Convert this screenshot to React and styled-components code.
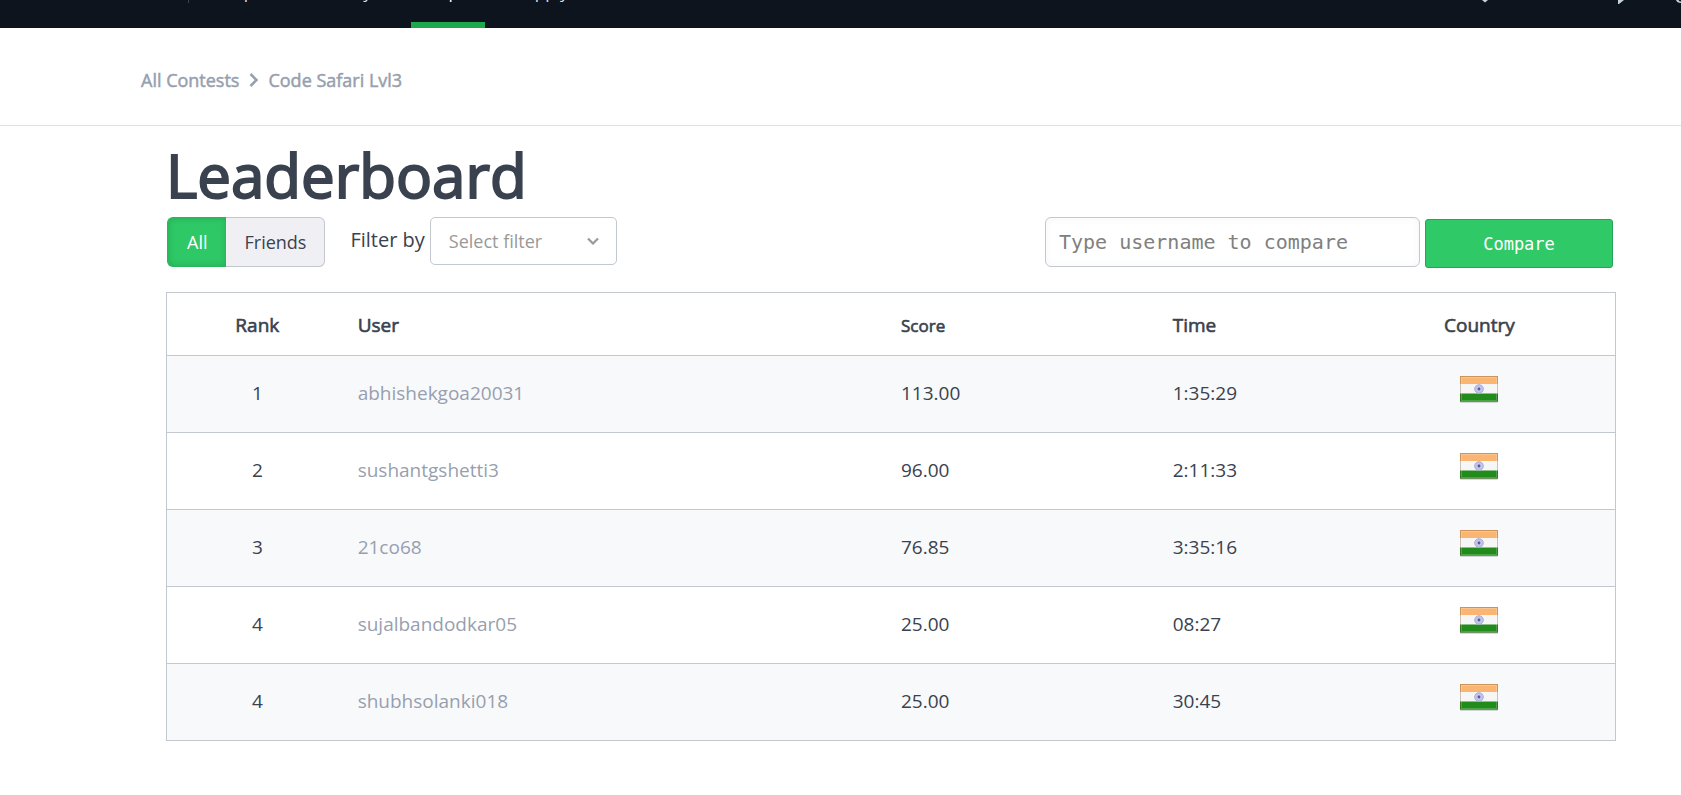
import React from "react";
import styled, { createGlobalStyle } from "styled-components";

const Global = createGlobalStyle`
  *, *::before, *::after { box-sizing: border-box; }
  body {
    margin: 0;
    background: #fff;
    color: #39424e;
    font-family: "Open Sans", "Liberation Sans", sans-serif;
    font-size: 19px;
    font-weight: 400;
  }
`;

const TopBar = styled.header`
  display: flex;
  align-items: flex-end;
  justify-content: space-between;
  height: 28px;
  overflow: hidden;
  background: #0e141e;
  padding-left: 188px;
`;

const Nav = styled.nav`
  display: flex;
  gap: 38px;
  padding-left: 27px;
  border-left: 1px solid #39424e;
  margin-bottom: 25px;
`;

const NavLink = styled.a`
  display: block;
  flex: none;
  margin-bottom: -25px;
  padding: 0 1px ${(p) => (p.$active ? 19 : 25)}px;
  border-bottom: ${(p) => (p.$active ? "6px solid #1ba94c" : "none")};
  color: ${(p) => (p.$active ? "#fff" : "#dcdfe4")};
  font-size: 17px;
  font-weight: 500;
  line-height: 23px;
  text-decoration: none;
`;

const TopActions = styled.div`
  display: flex;
  align-self: flex-start;
  svg { display: block; }
`;

const Crumbs = styled.nav`
  display: flex;
  align-items: center;
  gap: 9px;
  height: 98px;
  padding: 6px 141px 0;
  border-bottom: 1px solid #e0e1e5;
  font-size: 18px;
  line-height: 24px;
`;

const Crumb = styled.a`
  color: #979faf;
  text-decoration: none;
  -webkit-text-stroke: 0.5px;
`;

const Main = styled.main`
  padding: 10px 65px 55px 166px;
`;

const Title = styled.h1`
  margin: 0 0 2px;
  font-size: 60px;
  line-height: 79px;
  font-weight: 400;
  -webkit-text-stroke: 2px;
`;

const Toolbar = styled.div`
  display: flex;
  align-items: flex-start;
  justify-content: space-between;
  padding: 0 3px 0 1px;
  margin-bottom: 24px;
`;

const Group = styled.div`
  display: flex;
  align-items: flex-start;
  gap: 5px;
`;

const Segments = styled.div`
  display: flex;
  margin-right: 20px;
`;

const Segment = styled.button`
  height: 50px;
  padding: 0 18px;
  border: 1px solid ${(p) => (p.$on ? "#2bb65a" : "#c2c7d0")};
  border-width: ${(p) => (p.$on ? "1px 0 1px 1px" : "1px 1px 1px 0")};
  border-radius: ${(p) => (p.$on ? "6px 0 0 6px" : "0 6px 6px 0")};
  background: ${(p) => (p.$on ? "#2ec866" : "#f0eff4")};
  box-shadow: ${(p) => (p.$on ? "inset 0 0 6px rgba(0, 80, 30, 0.25)" : "none")};
  color: ${(p) => (p.$on ? "#fff" : "#39424e")};
  font: inherit;
  font-size: 18px;
  &:first-child { padding: 0 19px; }
`;

const FilterLabel = styled.label`
  font-size: 20px;
  line-height: 46px;
`;

const SelectBox = styled.div`
  position: relative;
  display: flex;
  align-items: center;
  width: 187px;
  svg { position: absolute; right: 18px; pointer-events: none; }
`;

const Select = styled.select`
  appearance: none;
  width: 100%;
  height: 48px;
  padding: 0 18px;
  border: 1px solid #c2c7d0;
  border-radius: 5px;
  background: #fff;
  color: #999;
  font: inherit;
  font-size: 18px;
`;

const CompareInput = styled.input`
  width: 375px;
  height: 50px;
  padding: 0 13px;
  border: 1px solid #c2c7d0;
  border-radius: 6px;
  box-shadow: inset 0 0 8px rgba(0, 0, 0, 0.04);
  color: #39424e;
  font-family: "DejaVu Sans Mono", monospace;
  font-size: 20px;
  &::placeholder { color: #808080; }
`;

const CompareButton = styled.button`
  width: 188px;
  height: 49px;
  margin-top: 2px;
  border: 1px solid #27a557;
  border-radius: 3px;
  background: #30c968;
  color: #fff;
  font-family: "DejaVu Sans Mono", monospace;
  font-size: 17px;
`;

const Board = styled.table`
  width: 100%;
  table-layout: fixed;
  border-collapse: collapse;
  border: 1px solid #c2c7d0;
  tbody tr:nth-child(odd) { background: #f8f9fb; }
`;

const Col = styled.col`
  width: ${(p) => p.$w}%;
`;

const Th = styled.th`
  height: 63px;
  padding: 2px 0 0 ${(p) => (p.$center ? 0 : 10)}px;
  text-align: ${(p) => (p.$center ? "center" : "left")};
  font-size: ${(p) => (p.$small ? 17 : 19)}px;
  font-weight: 400;
  -webkit-text-stroke: 0.6px;
`;

const Td = styled.td`
  height: 77px;
  padding: 0 0 2px ${(p) => (p.$center ? 0 : 10)}px;
  border-top: 1px solid #c2c7d0;
  text-align: ${(p) => (p.$center ? "center" : "left")};
  svg { display: block; margin: 0 auto 8px; }
`;

const UserLink = styled.a`
  color: #979faf;
  text-decoration: none;
`;

const FlagIndia = () => (
  <svg width="40" height="29" viewBox="0 0 40 29" role="img" aria-label="India">
    <rect x="1" y="2" width="38" height="26" rx="1" fill="#000" opacity="0.15" />
    <rect x="1" y="1" width="38" height="9" fill="#fab572" />
    <rect x="1" y="9" width="38" height="10" fill="#f6f6f6" />
    <rect x="1" y="18.5" width="38" height="8" fill="#218b1b" />
    <rect x="1.5" y="1.5" width="37" height="25" fill="none" stroke="#5d4a2a" strokeOpacity="0.3" />
    <rect x="2.5" y="2.5" width="35" height="23" fill="none" stroke="#fff" strokeOpacity="0.2" />
    <circle cx="20" cy="14" r="4.3" fill="#c3c5e6" stroke="#a9acda" />
    <circle cx="20" cy="14" r="1.4" fill="#5458ad" />
  </svg>
);

const rows = [
  ["1", "abhishekgoa20031", "113.00", "1:35:29"],
  ["2", "sushantgshetti3", "96.00", "2:11:33"],
  ["3", "21co68", "76.85", "3:35:16"],
  ["4", "sujalbandodkar05", "25.00", "08:27"],
  ["4", "shubhsolanki018", "25.00", "30:45"],
];

export default function App() {
  return (
    <>
      <Global />
      <TopBar>
        <Nav aria-label="Main">
          <NavLink href="#prepare">Prepare</NavLink>
          <NavLink href="#certify">Certify</NavLink>
          <NavLink href="#compete" $active>Compete</NavLink>
          <NavLink href="#apply">Apply</NavLink>
        </Nav>
        <TopActions>
          <svg width="201" height="5" viewBox="0 0 201 5" fill="#c3d3d8" aria-hidden="true">
            <path d="M2 0h6L5 2.5z" />
            <path d="M138 0h6l-5 4h-1z" />
            <path d="M196 0q1 3 5 3v-1.500q-2 0-2.500-1.500z" />
          </svg>
        </TopActions>
      </TopBar>
      <Crumbs aria-label="Breadcrumb">
        <Crumb href="#contests">All Contests</Crumb>
        <svg width="11" height="14" viewBox="0 0 11 14" fill="none" stroke="#979faf" strokeWidth="2.5">
          <path d="M2.500 1 8.500 7 2.500 13" />
        </svg>
        <Crumb href="#contest">Code Safari Lvl3</Crumb>
      </Crumbs>
      <Main>
        <Title>Leaderboard</Title>
        <Toolbar>
          <Group>
            <Segments>
              <Segment type="button" $on>All</Segment>
              <Segment type="button">Friends</Segment>
            </Segments>
            <FilterLabel htmlFor="filter">Filter by</FilterLabel>
            <SelectBox>
              <Select id="filter" defaultValue="">
                <option value="">Select filter</option>
              </Select>
              <svg width="12" height="8" viewBox="0 0 12 8" fill="none" stroke="#999" strokeWidth="2.2">
                <path d="M1 1.5 6 6.500 11 1.500" />
              </svg>
            </SelectBox>
          </Group>
          <Group>
            <CompareInput aria-label="Username" placeholder="Type username to compare" />
            <CompareButton type="button">Compare</CompareButton>
          </Group>
        </Toolbar>
        <Board>
          <colgroup>
            <Col $w={12.5} /><Col $w={37.5} /><Col $w={18.75} /><Col $w={12.5} /><Col $w={18.75} />
          </colgroup>
          <thead>
            <tr>
              <Th $center>Rank</Th><Th>User</Th><Th $small>Score</Th><Th>Time</Th><Th $center>Country</Th>
            </tr>
          </thead>
          <tbody>
            {rows.map(([rank, user, score, time]) => (
              <tr key={user}>
                <Td $center>{rank}</Td>
                <Td><UserLink href={"#" + user}>{user}</UserLink></Td>
                <Td>{score}</Td>
                <Td>{time}</Td>
                <Td $center><FlagIndia /></Td>
              </tr>
            ))}
          </tbody>
        </Board>
      </Main>
    </>
  );
}
